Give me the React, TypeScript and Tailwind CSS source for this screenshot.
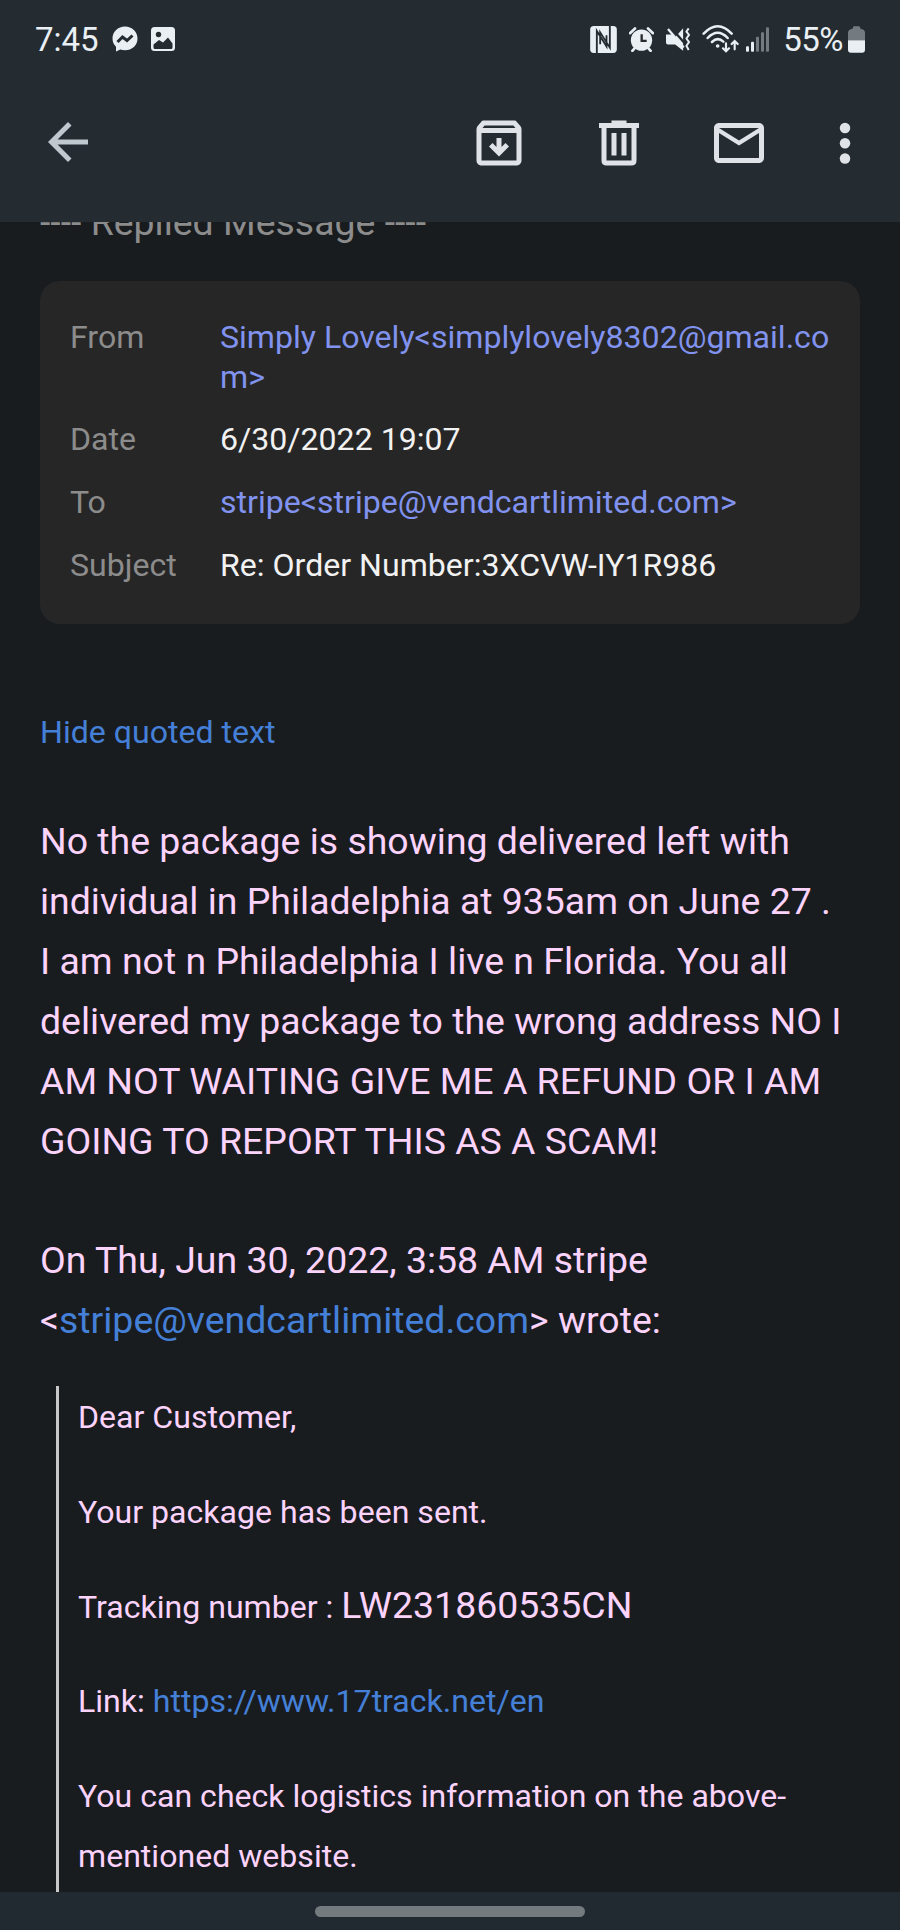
import React from 'react';

const META = [
  { label: 'From', value: 'Simply Lovely<simplylovely8302@gmail.com>', link: true },
  { label: 'Date', value: '6/30/2022 19:07', link: false },
  { label: 'To', value: 'stripe<stripe@vendcartlimited.com>', link: true },
  { label: 'Subject', value: 'Re: Order Number:3XCVW-IY1R986', link: false },
];

const NfcIcon: React.FC = () => (
  <svg viewBox="0 0 80 81" className="w-[27px] h-[27px]">
    <rect width="80" height="81" rx="11" fill="currentColor" />
    <path d="M20 81V15l29 46V28M59 0v65L30 19v36" fill="none" stroke="#242c32" strokeWidth="5.500" />
  </svg>
);

const AlarmIcon: React.FC = () => (
  <svg viewBox="0 0 75 74" className="ml-3 w-[25px] h-[25px]">
    <circle cx="37.500" cy="39" r="32" fill="currentColor" />
    <path d="M3 18L18 4M72 18L57 4M18 62l-8 9M57 62l8 9" stroke="currentColor" strokeWidth="8" strokeLinecap="round" />
    <path d="M38 21v20h15" fill="none" stroke="#242c32" strokeWidth="7" />
  </svg>
);

const MuteVibrateIcon: React.FC = () => (
  <svg viewBox="0 0 76 74" className="ml-3 w-[25px] h-[25px]">
    <path d="M0 22h20l8 8 24-27v68L28 52H6q-6 0-6-6z" fill="currentColor" />
    <path d="M12-3l46 53" stroke="#242c32" strokeWidth="7" />
    <path d="M6 5l48 56" stroke="currentColor" strokeWidth="7" />
    <path d="M69 3l-7 10 8 10-8 11 8 11-8 11 7 13" fill="none" stroke="currentColor" strokeWidth="6" strokeLinejoin="round" />
  </svg>
);

const WifiIcon: React.FC = () => (
  <svg viewBox="0 0 109 84" className="ml-[11px] w-[37px] h-7" fill="none" stroke="currentColor" strokeWidth="7.500" strokeLinecap="round">
    <path d="M4 26Q46-18 88 26M16 39Q46 8 76 39M29 51Q46 34 63 50" />
    <circle cx="46" cy="63" r="5.500" fill="currentColor" stroke="none" />
    <path d="M71 55v23M62 70l9 9 9-9M97 73V50M88 57l9-9 9 9" strokeWidth="6.500" />
  </svg>
);

const SignalIcon: React.FC = () => (
  <svg viewBox="0 0 69 74" className="ml-[7px] w-[23px] h-[25px]" fill="currentColor">
    <rect y="57" width="9" height="17" rx="3" />
    <rect x="15" y="44" width="9" height="30" rx="3" />
    <g className="text-[#737b80]">
      <rect x="30" y="29" width="9" height="45" rx="3" />
      <rect x="45" y="15" width="9" height="59" rx="3" />
      <rect x="60" width="9" height="74" rx="3" />
    </g>
  </svg>
);

const BatteryIcon: React.FC = () => (
  <svg viewBox="0 0 52 81" className="ml-[5px] w-[17px] h-[27px]">
    <path d="M15 7V4q0-4 4-4h14q4 0 4 4v3q15 3 15 13v23H0V20Q0 10 15 7z" fill="#737b80" />
    <path d="M0 43h52v29q0 9-9 9H9q-9 0-9-9z" fill="currentColor" />
  </svg>
);

const StatusBar: React.FC = () => (
  <div className="flex items-center justify-between h-[78px] pl-[35px] pr-[35px] text-[#e9eff3]">
    <div className="flex items-center">
      <span className="text-[33px] leading-none">7:45</span>
      <svg viewBox="0 0 26 26" className="ml-[13px] w-[26px] h-[26px]">
        <path d="M13 .5C5.900.5.500 5.600.500 12.500c0 3.500 1.400 6.200 3.500 8.200L4 25.500l4.300-2c1.500.5 3 .8 4.700.8 7.100 0 12.500-5 12.500-11.800S20.100.5 13 .5z" fill="currentColor" />
        <path d="M5.500 16l5-5 4.500 3.500 5.500-5" fill="none" stroke="#242c32" strokeWidth="3" />
      </svg>
      <svg viewBox="0 0 24 24" className="ml-[13px] w-6 h-6">
        <rect width="24" height="24" rx="3.500" fill="currentColor" />
        <circle cx="7.500" cy="7.500" r="2.700" fill="#242c32" />
        <path d="M2.500 17.500l5.500-4.500 4 2.500 5-5 4.500 6v4q0 1.500-1.500 1.500H4q-1.500 0-1.500-1.500z" fill="#242c32" />
      </svg>
    </div>
    <div className="flex items-center">
      <NfcIcon />
      <AlarmIcon />
      <MuteVibrateIcon />
      <WifiIcon />
      <SignalIcon />
      <span className="ml-3.5 text-[33px] leading-none tracking-[-0.500px]">55%</span>
      <BatteryIcon />
    </div>
  </div>
);

const Toolbar: React.FC = () => (
  <div className="flex items-center h-[144px] pl-[38px] pr-[25px] pb-[15px] text-[#dfe3e8]">
    <svg viewBox="0 0 24 24" className="mb-0.5 w-[60px] h-[60px] text-[#bfc7cf]" fill="currentColor">
      <path d="M20 11H7.830l5.590-5.590L12 4l-8 8 8 8 1.410-1.410L7.830 13H20v-2z" />
    </svg>
    <svg viewBox="0 0 24 24" className="ml-auto w-[60px] h-[60px]" fill="currentColor">
      <path d="M20.540 5.230l-1.390-1.680C18.880 3.210 18.470 3 18 3H6c-.47 0-.88.21-1.160.55L3.460 5.230C3.170 5.570 3 6.020 3 6.500V19c0 1.100.9 2 2 2h14c1.100 0 2-.9 2-2V6.500c0-.48-.17-.93-.46-1.270zM6.240 5h11.520l.83 1H5.420l.82-1zM5 19V8h14v11H5z" />
      <path d="M16 13.400l-4 4-4-4L9.400 12l1.600 1.600V10h2v3.600l1.600-1.600z" />
    </svg>
    <svg viewBox="0 0 24 24" className="ml-[60px] w-[60px] h-[60px]" fill="currentColor">
      <path d="M9 3h6v1h5v2h-1v13q0 2-2 2H7q-2 0-2-2V6H4V4h5zM7 6v13h10V6zM9 8h2v9H9zM13 8h2v9h-2z" fillRule="evenodd" />
    </svg>
    <svg viewBox="0 0 24 24" className="ml-[60px] w-[60px] h-[60px]" fill="currentColor">
      <path d="M20 4H4c-1.100 0-2 .9-2 2v12c0 1.100.9 2 2 2h16c1.100 0 2-.9 2-2V6c0-1.100-.9-2-2-2zm0 14H4V8l8 5 8-5v10zm-8-7L4 6h16l-8 5z" />
    </svg>
    <svg viewBox="0 0 24 24" className="ml-[46px] w-[60px] h-[60px]" fill="currentColor">
      <circle cx="12" cy="6" r="2.100" />
      <circle cx="12" cy="12.100" r="2.100" />
      <circle cx="12" cy="18.200" r="2.100" />
    </svg>
  </div>
);

const App: React.FC = () => {
  return (
    <div className="flex flex-col w-[900px] h-[1930px] overflow-hidden bg-[#191c1f] font-[Roboto,sans-serif]">
      <header className="shrink-0 bg-[#242c32]">
        <StatusBar />
        <Toolbar />
      </header>

      <main className="flex-1 min-h-0 overflow-hidden px-10">
        {/* heading is scrolled halfway under the toolbar */}
        <div className="-mt-6 h-[83px] text-[37.440px] leading-[48px] text-[#8c8c8c]">---- Replied Message ----</div>

        <div className="flex flex-col gap-[23px] h-[343px] rounded-[20px] bg-[#262626] px-[30px] pt-[37px] text-[32.080px] leading-[39.700px]">
          {META.map((row) => (
            <div key={row.label} className="flex">
              <div className="w-[150px] shrink-0 text-[#8c8c8c]">{row.label}</div>
              <div className={row.link ? 'flex-1 break-all text-[#8193ee]' : 'flex-1 text-[#f2f2f2]'}>{row.value}</div>
            </div>
          ))}
        </div>

        <div className="mt-[84px] text-[32.080px] leading-[48px] text-[#4580d8]">Hide quoted text</div>

        <div className="mt-[56px] text-[37.440px] leading-[59.900px] text-[#fbd3fb]">
          <p>
            No the package is showing delivered left with<br />
            individual in Philadelphia at 935am on June 27 .<br />
            I am not n Philadelphia I live n Florida. You all<br />
            delivered my package to the wrong address NO I<br />
            AM NOT WAITING GIVE ME A REFUND OR I AM<br />
            GOING TO REPORT THIS AS A SCAM!
          </p>
          <p className="mt-[60px]">
            On Thu, Jun 30, 2022, 3:58 AM stripe<br />
            &lt;<span className="text-[#4580d8]">stripe@vendcartlimited.com</span>&gt; wrote:
          </p>
        </div>

        <blockquote className="flex flex-col gap-[34.700px] mt-[35px] ml-4 pt-px h-[600px] border-l-[3px] border-[#c8c8c8] pl-[19px] text-[32.080px] leading-[60px] text-[#fbd3fb]">
          <p>Dear Customer,</p>
          <p>Your package has been sent.</p>
          <p>Tracking number : <span className="text-[37.440px] leading-none">LW231860535CN</span></p>
          <p>Link: <span className="text-[#4580d8]">https://www.17track.net/en</span></p>
          <p>You can check logistics information on the above-<br />mentioned website.</p>
        </blockquote>
      </main>

      <footer className="flex shrink-0 justify-center h-[38px] pt-3.5 bg-[#212a30]">
        <div className="w-[270px] h-[11px] rounded-full bg-[#737b7f]" />
      </footer>
    </div>
  );
};

export default App;
